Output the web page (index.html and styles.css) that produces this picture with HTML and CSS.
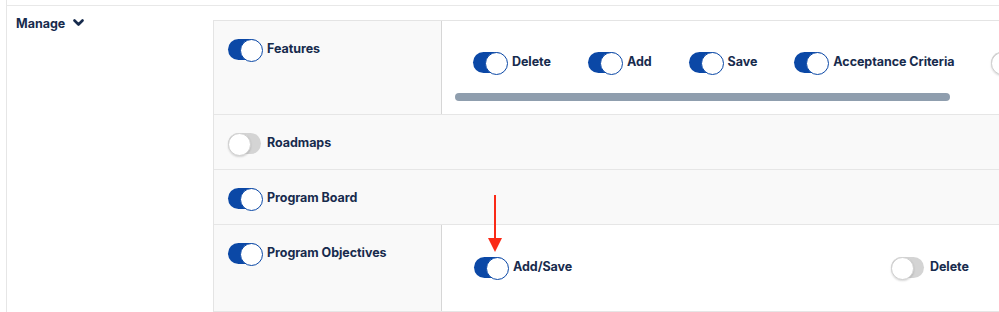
FILE: index.html
```html
<!DOCTYPE html>
<html lang="en">
<head>
  <meta charset="UTF-8">
  <title>Permissions - Manage</title>
  <link rel="stylesheet" href="styles.css">
</head>
<body>
<div class="prev-panel"></div>
<section class="perm">
  <div class="perm-title">
    Manage
    <svg class="chevron" width="11" height="8" viewBox="0 0 11 8">
      <path d="M1.5 1.5 L5.5 5.5 L9.5 1.5" fill="none" stroke="#172b4d" stroke-width="2.6" stroke-linecap="round" stroke-linejoin="round"/>
    </svg>
  </div>

  <div class="perm-grid">
    <div class="perm-row split tall">
      <div class="cell-main">
        <span class="switch on"></span><span class="label">Features</span>
      </div>
      <div class="cell-sub">
        <div class="sub-list">
          <div class="sub-item"><span class="switch on"></span><span class="label">Delete</span></div>
          <div class="sub-item"><span class="switch on"></span><span class="label">Add</span></div>
          <div class="sub-item"><span class="switch on"></span><span class="label">Save</span></div>
          <div class="sub-item"><span class="switch on"></span><span class="label">Acceptance Criteria</span></div>
          <div class="sub-item"><span class="switch"></span></div>
        </div>
        <div class="scroll-thumb"></div>
      </div>
    </div>

    <div class="perm-row">
      <div class="cell-main"><span class="switch"></span><span class="label">Roadmaps</span></div>
    </div>

    <div class="perm-row">
      <div class="cell-main"><span class="switch on"></span><span class="label">Program Board</span></div>
    </div>

    <div class="perm-row split objectives">
      <div class="cell-main">
        <span class="switch on"></span><span class="label">Program Objectives</span>
      </div>
      <div class="cell-sub">
        <div class="sub-cols">
          <div class="sub-item"><span class="switch on"></span><span class="label">Add/Save</span></div>
          <div class="sub-item"><span class="switch"></span><span class="label">Delete</span></div>
        </div>
        <!-- annotation arrow -->
        <div class="arrow"></div>
      </div>
    </div>
  </div>
</section>
</body>
</html>
```

FILE: styles.css
```css
* {
  margin: 0;
  padding: 0;
  box-sizing: border-box;
}

body {
  font-family: 'Inter', 'Liberation Sans', sans-serif;
  background: #fff;
  color: #172b4d;
  width: 999px;
  height: 312px;
  overflow: hidden;
}

.prev-panel {
  height: 5px;
  margin-left: 6px;
  border-left: 1px solid #e6e6e6;
}

.perm {
  display: flex;
  margin-left: 6px;
  border-top: 1px solid #e8e8e8;
  border-left: 1px solid #e6e6e6;
  padding: 10px 0 0 9px;
  height: 307px;
}

.perm-title {
  width: 197px;
  flex-shrink: 0;
  display: flex;
  align-items: flex-start;
  gap: 8px;
  font-size: 12.5px;
  font-weight: 700;
  line-height: 16px;
}

.chevron {
  margin-top: 3px;
}

.perm-grid {
  width: 900px;
  flex-shrink: 0;
  margin-top: 4px;
  border-top: 1px solid #e4e4e4;
  border-left: 1px solid #e4e4e4;
}

.perm-row {
  display: flex;
  height: 55px;
  background: #f9f9f9;
  border-bottom: 1px solid #e6e6e6;
}

.perm-row.tall {
  height: 94px;
}

.perm-row.objectives {
  height: 87px;
}

.cell-main {
  width: 228px;
  flex-shrink: 0;
  display: flex;
  align-items: flex-start;
  padding: 18px 0 0 14px;
}

.split .cell-main {
  border-right: 1px solid #d6d6d6;
}

.cell-sub {
  position: relative;
  flex: 1;
  background: #fff;
  padding: 31px 0 0 31px;
  overflow: hidden;
}

.objectives .cell-sub {
  padding: 32px 0 0 32px;
  overflow: visible;
}

.sub-list {
  display: flex;
  gap: 37px;
  white-space: nowrap;
}

.sub-item {
  display: flex;
  align-items: flex-start;
  flex-shrink: 0;
}

.sub-cols {
  display: grid;
  grid-template-columns: 417px auto;
}

.scroll-thumb {
  width: 495px;
  height: 8px;
  margin: 20px 0 0 -18px;
  border-radius: 4px;
  background: #8f9eae;
}

.label {
  font-size: 12.5px;
  font-weight: 700;
  line-height: 19px;
  letter-spacing: -0.05px;
  margin-left: 6px;
  white-space: nowrap;
}

.switch {
  position: relative;
  display: inline-block;
  width: 33px;
  height: 21px;
  border-radius: 11px;
  background: #d4d4d4;
  flex-shrink: 0;
}

.switch:after {
  content: "";
  position: absolute;
  top: 0;
  left: 0;
  width: 21px;
  height: 21px;
  border-radius: 50%;
  background: #fff;
  border: 1px solid #d0d0d0;
  box-shadow: 0 1px 2px rgba(0, 0, 0, 0.15);
}

.switch.on {
  background: #0b48a6;
}

.switch.on:after {
  left: 12px;
  border-color: #0b48a6;
  box-shadow: none;
}

.arrow {
  position: absolute;
  left: 52px;
  top: -30px;
  width: 2px;
  height: 45px;
  background: #fa2a17;
}

.arrow:after {
  content: "";
  position: absolute;
  left: -6px;
  top: 43px;
  border-left: 7px solid transparent;
  border-right: 7px solid transparent;
  border-top: 14px solid #fa2a17;
}
```
